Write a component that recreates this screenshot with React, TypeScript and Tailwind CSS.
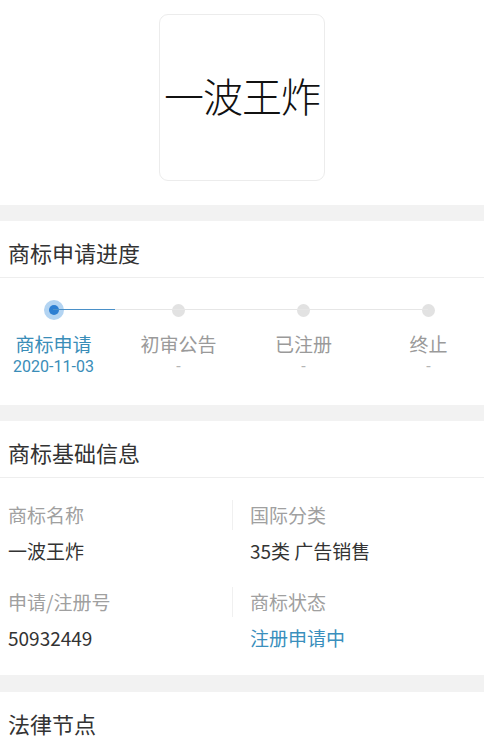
const steps = [
  { name: '商标申请', date: '2020-11-03', active: true },
  { name: '初审公告', date: '-', active: false },
  { name: '已注册', date: '-', active: false },
  { name: '终止', date: '-', active: false },
];

function SectionTitle({ title }: { title: string }) {
  return (
    <div className="border-b border-[#eeeeee] px-2 h-[57px] pt-[16px]">
      <h2 className="text-[22px] leading-[30px] text-[#333333]">{title}</h2>
    </div>
  );
}

function Gap({ h }: { h: string }) {
  return <div className={`bg-[#f2f2f2] ${h}`} />;
}

function InfoCell({ label, value, right, blue }: { label: string; value: string; right?: boolean; blue?: boolean }) {
  return (
    <div className={right ? 'pl-[17px]' : 'pl-2'}>
      <div className={`text-[19px] leading-[30px] text-[#a0a0a0] ${right ? '' : 'border-r border-[#f0f0f0]'}`}>{label}</div>
      <div className={`text-[19px] leading-6 mt-[9px] ${blue ? 'text-[#3a8fbd]' : 'text-[#333333]'}`}>{value}</div>
    </div>
  );
}

export default function App() {
  return (
    <div
      className="w-[484px] h-[741px] overflow-hidden bg-white"
      style={{ fontFamily: '"Noto Sans CJK SC", "Noto Sans", sans-serif' }}
    >
      {/* logo */}
      <div className="flex justify-center pt-[14px] pb-[24px]">
        <div className="w-[166px] h-[167px] rounded-[9px] border border-[#ececec] flex items-center justify-center">
          <span className="text-[40px] font-light text-[#111111] tracking-[-1px] leading-none -mt-[6px]">一波王炸</span>
        </div>
      </div>

      <Gap h="h-[16px]" />

      <SectionTitle title="商标申请进度" />
      <div className="relative h-[127px] overflow-hidden">
        <div className="absolute left-[53px] right-[56px] top-[31px] h-px bg-[#e6e6e6]" />
        <div className="absolute left-[53px] w-[62px] top-[31px] h-px bg-[#4a90c8]" />
        <div className="flex -ml-[9px] pt-[22px]">
          {steps.map((s) => (
            <div key={s.name} className="w-[125px] shrink-0 flex flex-col items-center">
              <div className="h-[20px] flex items-center justify-center">
                {s.active ? (
                  <div className="w-[20px] h-[20px] rounded-full bg-[#b3d4f2] flex items-center justify-center">
                    <div className="w-[10px] h-[10px] rounded-full bg-[#2d7fd2]" />
                  </div>
                ) : (
                  <div className="w-[13px] h-[13px] rounded-full bg-[#e2e2e2]" />
                )}
              </div>
              <div className={`text-[19px] leading-6 mt-[12px] ${s.active ? 'text-[#3a8db8]' : 'text-[#9a9a9a]'}`}>{s.name}</div>
              <div
                className={`text-[16px] leading-5 mt-[1px] ${s.active ? 'text-[#3a8db8]' : 'text-[#b5b5b5]'}`}
                style={{ fontFamily: 'Roboto, "Noto Sans", sans-serif' }}
              >
                {s.date}
              </div>
            </div>
          ))}
        </div>
      </div>

      <Gap h="h-[16px]" />

      <SectionTitle title="商标基础信息" />
      <div className="grid grid-cols-[233px_1fr] pt-[22px] gap-y-[24px]">
        <InfoCell label="商标名称" value="一波王炸" />
        <InfoCell label="国际分类" value="35类 广告销售" right />
        <InfoCell label="申请/注册号" value="50932449" />
        <InfoCell label="商标状态" value="注册申请中" right blue />
      </div>
      <div className="h-[25px]" />

      <Gap h="h-[17px]" />
      <SectionTitle title="法律节点" />
    </div>
  );
}
